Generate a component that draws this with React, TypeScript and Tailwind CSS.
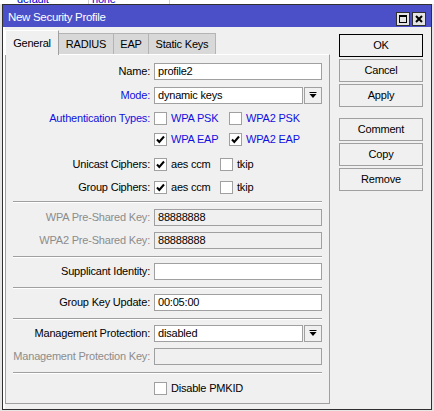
import React from "react";

const font = { fontFamily: '"Liberation Sans", Arial, sans-serif' };

const Check = ({ checked }: { checked?: boolean }) => (
  <div className="w-[13px] h-[13px] border border-[#a0a0a0] bg-white flex items-center justify-center shrink-0">
    {checked && (
      <svg width="9" height="9" viewBox="0 0 9 9">
        <path d="M1 4.5 L3.3 7 L8 1.5" stroke="#000" strokeWidth="2" fill="none" />
      </svg>
    )}
  </div>
);

const DropBtn = () => (
  <div className="w-[18px] h-[17px] border border-[#a0a0a0] bg-[#f0f0f0] flex items-center justify-center shrink-0">
    <svg width="8" height="7" viewBox="0 0 8 7">
      <rect x="0.5" y="0" width="7" height="1" fill="#000" />
      <path d="M0.5 2 H7.5 L4 6 Z" fill="#000" />
    </svg>
  </div>
);

const Label = ({ text, tone = "normal" }: { text: string; tone?: "normal" | "blue" | "gray" }) => (
  <div
    className={
      "w-[148px] pr-[4px] text-right whitespace-nowrap shrink-0 " +
      (tone === "blue" ? "text-[#1010e0]" : tone === "gray" ? "text-[#8c8c8c]" : "text-black")
    }
  >
    {text}
  </div>
);

const Input = ({ value = "", disabled, drop }: { value?: string; disabled?: boolean; drop?: boolean }) => (
  <div className="flex flex-1 gap-[1px] mr-[7px]">
    <div
      className={
        "flex-1 h-[17px] border border-[#a0a0a0] px-[3px] leading-[15px] " +
        (disabled ? "bg-[#f0f0f0]" : "bg-white")
      }
    >
      {value}
    </div>
    {drop && <DropBtn />}
  </div>
);

const Sep = ({ mt }: { mt: string }) => (
  <div className={"ml-[7px] mr-[7px] h-[2px] border-t border-[#a0a0a0] border-b border-b-white " + mt} />
);

const CheckItem = ({ label, checked, blue, w }: { label: string; checked?: boolean; blue?: boolean; w: string }) => (
  <div className={"flex items-center gap-[4px] " + w}>
    <Check checked={checked} />
    <span className={blue ? "text-[#1010e0]" : "text-black"}>{label}</span>
  </div>
);

const Button = ({ text, primary }: { text: string; primary?: boolean }) => (
  <div
    className={
      "h-[23px] w-[84px] flex items-center justify-center bg-[#f0f0f0] border " +
      (primary ? "border-black" : "border-[#a0a0a0]")
    }
  >
    {text}
  </div>
);

export default function App() {
  return (
    <div
      className="w-[434px] h-[411px] bg-[#e6e6e6] overflow-hidden text-[11px] tracking-[-0.2px] text-black"
      style={font}
    >
      {/* list behind the window */}
      <div className="h-[4px] bg-white overflow-hidden flex">
        <div className="w-[89px] border-r border-[#d0d0d0] pl-[17px] -mt-[9px] text-[#0000d0] underline">default</div>
        <div className="w-[81px] border-r border-[#d0d0d0] pl-[3px] -mt-[9px] text-[#0000d0] underline">none</div>
      </div>

      <div className="ml-[2px] w-[430px] h-[406px] border border-[#303030] flex flex-col">
        {/* title bar */}
        <div className="h-[22px] bg-[#4b4fc8] flex items-end justify-between pl-[5px] pr-[5px] pb-[1px]">
          <span className="text-white text-[11.5px] tracking-[-0.3px] leading-[14px] mb-[2px]">New Security Profile</span>
          <div className="flex gap-[2px]">
            <div className="w-[14px] h-[14px] bg-[#e4e4e4] border border-[#303030] flex items-center justify-center">
              <div className="w-[8px] h-[8px] border border-black border-t-2" />
            </div>
            <div className="w-[14px] h-[14px] bg-[#e4e4e4] border border-[#303030] flex items-center justify-center">
              <svg width="8" height="8" viewBox="0 0 8 8">
                <path d="M1 1 L7 7 M7 1 L1 7" stroke="#000" strokeWidth="2" />
              </svg>
            </div>
          </div>
        </div>

        {/* body */}
        <div className="flex-1 bg-[#f0f0f0] border-l-2 border-white flex">
          <div className="w-[325px] pt-[3px] flex flex-col">
            {/* tabs */}
            <div className="h-[24px] flex items-end">
              <div className="w-[54px] h-[25px] -mb-[1px] relative z-10 bg-[#f0f0f0] border-l border-t border-r border-l-white border-t-white border-r-[#a0a0a0] flex items-center justify-center">
                General
              </div>
              <div className="w-[55px] h-[21px] bg-[#d8d8d8] border-t border-r border-[#b4b4b4] flex items-center justify-center">
                RADIUS
              </div>
              <div className="w-[35px] h-[21px] bg-[#d8d8d8] border-t border-r border-[#b4b4b4] flex items-center justify-center">
                EAP
              </div>
              <div className="w-[67px] h-[21px] bg-[#d8d8d8] border-t border-r border-[#b4b4b4] flex items-center justify-center">
                Static Keys
              </div>
            </div>

            {/* panel */}
            <div className="h-[350px] border border-[#a0a0a0] border-t-white pt-[8px] pb-[6px] flex flex-col">
              <div className="h-[17px] flex items-center">
                <Label text="Name:" />
                <Input value="profile2" />
              </div>
              <div className="h-[17px] flex items-center mt-[7px]">
                <Label text="Mode:" tone="blue" />
                <Input value="dynamic keys" drop />
              </div>
              <div className="h-[17px] flex items-center mt-[6px]">
                <Label text="Authentication Types:" tone="blue" />
                <CheckItem label="WPA PSK" blue w="w-[75px]" />
                <CheckItem label="WPA2 PSK" blue w="w-[80px]" />
              </div>
              <div className="h-[17px] flex items-center mt-[4px]">
                <div className="w-[148px] shrink-0" />
                <CheckItem label="WPA EAP" checked blue w="w-[75px]" />
                <CheckItem label="WPA2 EAP" checked blue w="w-[80px]" />
              </div>
              <div className="h-[17px] flex items-center mt-[8px]">
                <Label text="Unicast Ciphers:" />
                <CheckItem label="aes ccm" checked w="w-[66px]" />
                <CheckItem label="tkip" w="w-[50px]" />
              </div>
              <div className="h-[17px] flex items-center mt-[6px]">
                <Label text="Group Ciphers:" />
                <CheckItem label="aes ccm" checked w="w-[66px]" />
                <CheckItem label="tkip" w="w-[50px]" />
              </div>

              <Sep mt="mt-[5px]" />

              <div className="h-[17px] flex items-center mt-[6px]">
                <Label text="WPA Pre-Shared Key:" tone="gray" />
                <Input value="88888888" disabled />
              </div>
              <div className="h-[17px] flex items-center mt-[6px]">
                <Label text="WPA2 Pre-Shared Key:" tone="gray" />
                <Input value="88888888" disabled />
              </div>

              <Sep mt="mt-[7px]" />

              <div className="h-[17px] flex items-center mt-[5px]">
                <Label text="Supplicant Identity:" />
                <Input />
              </div>

              <Sep mt="mt-[7px]" />

              <div className="h-[17px] flex items-center mt-[5px]">
                <Label text="Group Key Update:" />
                <Input value="00:05:00" />
              </div>

              <Sep mt="mt-[7px]" />

              <div className="h-[17px] flex items-center mt-[5px]">
                <Label text="Management Protection:" />
                <Input value="disabled" drop />
              </div>
              <div className="h-[17px] flex items-center mt-[6px]">
                <Label text="Management Protection Key:" tone="gray" />
                <Input disabled />
              </div>

              <Sep mt="mt-[7px]" />

              <div className="h-[17px] flex items-center mt-[6px]">
                <div className="w-[148px] shrink-0" />
                <CheckItem label="Disable PMKID" w="w-[100px]" />
              </div>
            </div>
          </div>

          {/* buttons */}
          <div className="ml-[9px] mt-[7px] flex flex-col gap-[2px]">
            <Button text="OK" primary />
            <Button text="Cancel" />
            <Button text="Apply" />
            <div className="h-[7px]" />
            <Button text="Comment" />
            <Button text="Copy" />
            <Button text="Remove" />
          </div>
        </div>
      </div>
    </div>
  );
}
